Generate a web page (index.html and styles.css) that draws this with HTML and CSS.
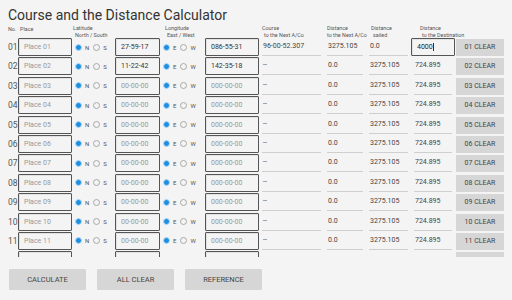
FILE: index.html
```html
<!DOCTYPE html>
<html lang="en">
<head>
    <meta charset="UTF-8">
    <meta name="viewport" content="width=device-width, initial-scale=1.0">
    <title>Course and the Distance Calculator</title>
    <link rel="stylesheet" href="styles.css">
</head>
<body>
<div class="page">
    <h1 class="title">Course and the Distance Calculator</h1>

    <!-- Column headings -->
    <div class="head grid">
        <div class="h-no">No.</div>
        <div class="h-place">Place</div>
        <div class="h-lat">Latitude<br><span class="in">North / South</span></div>
        <div></div>
        <div class="h-lon">Longitude<br><span class="in">East / West</span></div>
        <div></div>
        <div class="h-course">Course<br><span class="in">to the Next A/Co</span></div>
        <div class="h-next">Distance<br>to the Next A/Co</div>
        <div class="h-sailed">Distance<br><span class="in">sailed</span></div>
        <div class="h-dest">Distance<br><span class="in">to the Destination</span></div>
        <div></div>
    </div>

    <!-- Rows -->
    <div class="rows">
        <div class="row grid">
            <div class="no">01</div>
            <div class="box hint">Place 01</div>
            <div class="radio"><i class="dot on"></i>N<i class="dot"></i>S</div>
            <div class="box">27-59-17</div>
            <div class="radio"><i class="dot on"></i>E<i class="dot"></i>W</div>
            <div class="box">086-55-31</div>
            <div class="line">96-00-52.307</div>
            <div class="line">3275.105</div>
            <div class="line">0.0</div>
            <div class="box edit">4000<span class="caret"></span></div>
            <div class="clear">01 CLEAR</div>
        </div>
        <div class="row grid">
            <div class="no">02</div>
            <div class="box hint">Place 02</div>
            <div class="radio"><i class="dot on"></i>N<i class="dot"></i>S</div>
            <div class="box">11-22-42</div>
            <div class="radio"><i class="dot on"></i>E<i class="dot"></i>W</div>
            <div class="box">142-35-18</div>
            <div class="line hint">--</div>
            <div class="line">0.0</div>
            <div class="line">3275.105</div>
            <div class="line">724.895</div>
            <div class="clear">02 CLEAR</div>
        </div>
        <div class="row grid">
            <div class="no">03</div>
            <div class="box hint">Place 03</div>
            <div class="radio"><i class="dot on"></i>N<i class="dot"></i>S</div>
            <div class="box hint">00-00-00</div>
            <div class="radio"><i class="dot on"></i>E<i class="dot"></i>W</div>
            <div class="box hint">000-00-00</div>
            <div class="line hint">--</div>
            <div class="line">0.0</div>
            <div class="line">3275.105</div>
            <div class="line">724.895</div>
            <div class="clear">03 CLEAR</div>
        </div>
        <div class="row grid">
            <div class="no">04</div>
            <div class="box hint">Place 04</div>
            <div class="radio"><i class="dot on"></i>N<i class="dot"></i>S</div>
            <div class="box hint">00-00-00</div>
            <div class="radio"><i class="dot on"></i>E<i class="dot"></i>W</div>
            <div class="box hint">000-00-00</div>
            <div class="line hint">--</div>
            <div class="line">0.0</div>
            <div class="line">3275.105</div>
            <div class="line">724.895</div>
            <div class="clear">04 CLEAR</div>
        </div>
        <div class="row grid">
            <div class="no">05</div>
            <div class="box hint">Place 05</div>
            <div class="radio"><i class="dot on"></i>N<i class="dot"></i>S</div>
            <div class="box hint">00-00-00</div>
            <div class="radio"><i class="dot on"></i>E<i class="dot"></i>W</div>
            <div class="box hint">000-00-00</div>
            <div class="line hint">--</div>
            <div class="line">0.0</div>
            <div class="line">3275.105</div>
            <div class="line">724.895</div>
            <div class="clear">05 CLEAR</div>
        </div>
        <div class="row grid">
            <div class="no">06</div>
            <div class="box hint">Place 06</div>
            <div class="radio"><i class="dot on"></i>N<i class="dot"></i>S</div>
            <div class="box hint">00-00-00</div>
            <div class="radio"><i class="dot on"></i>E<i class="dot"></i>W</div>
            <div class="box hint">000-00-00</div>
            <div class="line hint">--</div>
            <div class="line">0.0</div>
            <div class="line">3275.105</div>
            <div class="line">724.895</div>
            <div class="clear">06 CLEAR</div>
        </div>
        <div class="row grid">
            <div class="no">07</div>
            <div class="box hint">Place 07</div>
            <div class="radio"><i class="dot on"></i>N<i class="dot"></i>S</div>
            <div class="box hint">00-00-00</div>
            <div class="radio"><i class="dot on"></i>E<i class="dot"></i>W</div>
            <div class="box hint">000-00-00</div>
            <div class="line hint">--</div>
            <div class="line">0.0</div>
            <div class="line">3275.105</div>
            <div class="line">724.895</div>
            <div class="clear">07 CLEAR</div>
        </div>
        <div class="row grid">
            <div class="no">08</div>
            <div class="box hint">Place 08</div>
            <div class="radio"><i class="dot on"></i>N<i class="dot"></i>S</div>
            <div class="box hint">00-00-00</div>
            <div class="radio"><i class="dot on"></i>E<i class="dot"></i>W</div>
            <div class="box hint">000-00-00</div>
            <div class="line hint">--</div>
            <div class="line">0.0</div>
            <div class="line">3275.105</div>
            <div class="line">724.895</div>
            <div class="clear">08 CLEAR</div>
        </div>
        <div class="row grid">
            <div class="no">09</div>
            <div class="box hint">Place 09</div>
            <div class="radio"><i class="dot on"></i>N<i class="dot"></i>S</div>
            <div class="box hint">00-00-00</div>
            <div class="radio"><i class="dot on"></i>E<i class="dot"></i>W</div>
            <div class="box hint">000-00-00</div>
            <div class="line hint">--</div>
            <div class="line">0.0</div>
            <div class="line">3275.105</div>
            <div class="line">724.895</div>
            <div class="clear">09 CLEAR</div>
        </div>
        <div class="row grid">
            <div class="no">10</div>
            <div class="box hint">Place 10</div>
            <div class="radio"><i class="dot on"></i>N<i class="dot"></i>S</div>
            <div class="box hint">00-00-00</div>
            <div class="radio"><i class="dot on"></i>E<i class="dot"></i>W</div>
            <div class="box hint">000-00-00</div>
            <div class="line hint">--</div>
            <div class="line">0.0</div>
            <div class="line">3275.105</div>
            <div class="line">724.895</div>
            <div class="clear">10 CLEAR</div>
        </div>
        <div class="row grid">
            <div class="no">11</div>
            <div class="box hint">Place 11</div>
            <div class="radio"><i class="dot on"></i>N<i class="dot"></i>S</div>
            <div class="box hint">00-00-00</div>
            <div class="radio"><i class="dot on"></i>E<i class="dot"></i>W</div>
            <div class="box hint">000-00-00</div>
            <div class="line hint">--</div>
            <div class="line">0.0</div>
            <div class="line">3275.105</div>
            <div class="line">724.895</div>
            <div class="clear">11 CLEAR</div>
        </div>
        <!-- next row peeks in under the scroll edge -->
        <div class="row grid">
            <div class="no"></div>
            <div class="box"></div>
            <div class="radio"><i class="dot on"></i><i class="dot gap"></i></div>
            <div class="box"></div>
            <div class="radio"><i class="dot on"></i><i class="dot gap"></i></div>
            <div class="box"></div>
            <div class="line"></div>
            <div class="line"></div>
            <div class="line"></div>
            <div class="line"></div>
            <div class="clear"></div>
        </div>
    </div>

    <!-- Bottom buttons -->
    <div class="actions">
        <button class="btn">CALCULATE</button>
        <button class="btn">ALL CLEAR</button>
        <button class="btn">REFERENCE</button>
    </div>
</div>
</body>
</html>
```

FILE: styles.css
```css
body {
    margin: 0;
    padding: 0;
    background-color: #f4f4f4;
    font-family: Roboto, "Noto Sans", sans-serif;
    color: #333;
}

.page {
    width: 512px;
    height: 300px;
    padding: 0 8px;
    box-sizing: border-box;
    overflow: hidden;
}

.title {
    margin: 0;
    padding-top: 8px;
    font-size: 14px;
    line-height: 15px;
    font-weight: normal;
    color: #333;
}

/* Shared column layout */
.grid {
    display: grid;
    grid-template-columns: 10px 54px 43px 45px 45px 54px 65px 42px 45px 44px 50px;
}

/* Column headings */
.head {
    height: 15px;
    box-sizing: border-box;
    font-size: 5.4px;
    line-height: 7px;
    color: #555;
    padding-top: 2px;
}

.h-no { padding-top: 1px; }
.h-place { padding: 1px 0 0 2px; }
.h-lat { padding-left: 1px; }
.h-lon { padding-left: 5px; }
.h-course { padding-left: 3px; }
.h-next { padding-left: 3px; white-space: nowrap; }
.h-sailed { padding-left: 5px; }
.h-dest { padding-left: 9px; white-space: nowrap; }
.in { padding-left: 2px; }

/* Rows */
.rows {
    height: 219px;
    overflow: hidden;
}

.row {
    height: 19.4px;
    align-items: start;
    font-size: 7px;
}

.no {
    font-size: 8.5px;
    line-height: 18px;
    color: #555;
}

.box {
    height: 18px;
    line-height: 16px;
    box-sizing: border-box;
    border: 1px solid #555;
    border-radius: 1px;
    padding-left: 5px;
    color: #333;
    box-shadow: inset 1px 1px 0 #e2e2e2;
}

.hint { color: #999; }

.edit {
    color: #222;
}

.caret {
    display: inline-block;
    width: 1px;
    height: 8px;
    background-color: #333;
    vertical-align: middle;
    margin-top: -1px;
}

.radio {
    display: flex;
    align-items: center;
    height: 18px;
    padding-left: 3px;
    font-size: 6px;
    color: #555;
}

.dot {
    width: 7px;
    height: 7px;
    box-sizing: border-box;
    border: 1px solid #a8a8a8;
    border-radius: 50%;
    margin: 0 3px 0 4px;
}

.dot:first-child {
    margin-left: 0;
}

.dot.gap {
    margin-left: 9px;
}

.dot.on {
    border: 1.5px solid #b9dcf7;
    background-color: #1e8fe0;
}

.line {
    height: 18px;
    line-height: 17px;
    margin: 0 3px 0 3px;
    border-bottom: 1px solid #cfcfcf;
    box-sizing: border-box;
    padding-left: 1px;
    color: #444;
}

.clear {
    height: 17px;
    line-height: 17px;
    margin: 1px 1px 0 1px;
    background-color: #d6d6d6;
    text-align: center;
    color: #444;
    font-size: 7px;
}

/* Bottom buttons */
.actions {
    display: flex;
    gap: 11px;
    padding: 12px 0 0 1px;
}

.btn {
    width: 77px;
    height: 21px;
    border: none;
    border-radius: 1px;
    background-color: #d6d6d6;
    font-family: Roboto, "Noto Sans", sans-serif;
    font-size: 7.5px;
    color: #444;
    padding: 0;
}
```
